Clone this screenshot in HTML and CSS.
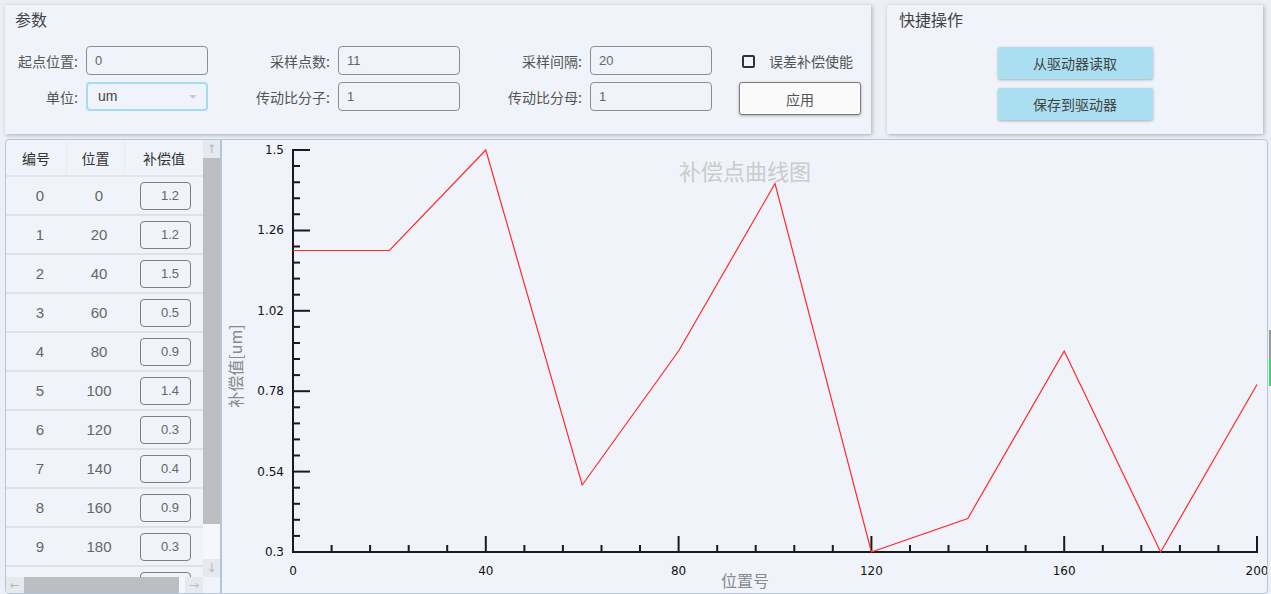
FILE: index.html
```html
<!DOCTYPE html>
<html lang="zh">
<head>
<meta charset="utf-8">
<title>补偿</title>
<link rel="stylesheet" href="styles.css">
</head>
<body>
<div class="top">
  <section class="panel params">
    <div class="ptitle">参数</div>
    <div class="grid">
      <label class="lbl">起点位置:</label><div class="inp">0</div>
      <label class="lbl">采样点数:</label><div class="inp">11</div>
      <label class="lbl">采样间隔:</label><div class="inp">20</div>
      <div class="chk"><span class="box"></span><span>误差补偿使能</span></div>
      <label class="lbl">单位:</label><div class="inp sel">um<span class="caret"></span></div>
      <label class="lbl">传动比分子:</label><div class="inp">1</div>
      <label class="lbl">传动比分母:</label><div class="inp">1</div>
      <button class="apply">应用</button>
    </div>
  </section>
  <section class="panel quick">
    <div class="ptitle">快捷操作</div>
    <div class="qbtns">
      <button class="qbtn">从驱动器读取</button>
      <button class="qbtn">保存到驱动器</button>
    </div>
  </section>
</div>
<div class="bottom">
  <section class="tablep">
    <div class="tmain">
      <div class="tbl">
        <div class="thead"><span>编号</span><span>位置</span><span>补偿值</span></div>
        <div class="trow"><span>0</span><span>0</span><span><i class="cell">1.2</i></span></div>
        <div class="trow"><span>1</span><span>20</span><span><i class="cell">1.2</i></span></div>
        <div class="trow"><span>2</span><span>40</span><span><i class="cell">1.5</i></span></div>
        <div class="trow"><span>3</span><span>60</span><span><i class="cell">0.5</i></span></div>
        <div class="trow"><span>4</span><span>80</span><span><i class="cell">0.9</i></span></div>
        <div class="trow"><span>5</span><span>100</span><span><i class="cell">1.4</i></span></div>
        <div class="trow"><span>6</span><span>120</span><span><i class="cell">0.3</i></span></div>
        <div class="trow"><span>7</span><span>140</span><span><i class="cell">0.4</i></span></div>
        <div class="trow"><span>8</span><span>160</span><span><i class="cell">0.9</i></span></div>
        <div class="trow"><span>9</span><span>180</span><span><i class="cell">0.3</i></span></div>
        <div class="trow"><span></span><span></span><span><i class="cell"></i></span></div>
      </div>
      <div class="vscroll">
        <div class="arr up">↑</div>
        <div class="vthumb"></div>
        <div class="vrest"></div>
        <div class="arr dn">↓</div>
      </div>
    </div>
    <div class="hscroll">
      <div class="arr lf">←</div>
      <div class="hthumb"></div>
      <div class="hrest"></div>
      <div class="arr rt">→</div>
      <div class="corner"></div>
    </div>
  </section>
  <section class="chartp">
    <svg class="chart" width="1046" height="454" viewBox="0 0 1046 454">
      <text x="523" y="40" class="ctitle" text-anchor="middle">补偿点曲线图</text>
      <g class="ticks" stroke="#1a1a1a" stroke-width="2">
        <line x1="71" y1="9" x2="71" y2="413"/>
        <line x1="70" y1="412" x2="1036" y2="412"/>
        <line x1="71" y1="10" x2="88" y2="10"/>
        <line x1="71" y1="90.4" x2="88" y2="90.4"/>
        <line x1="71" y1="170.8" x2="88" y2="170.8"/>
        <line x1="71" y1="251.2" x2="88" y2="251.2"/>
        <line x1="71" y1="331.6" x2="88" y2="331.6"/>
        <line x1="71" y1="26.1" x2="78" y2="26.1"/>
        <line x1="71" y1="42.2" x2="78" y2="42.2"/>
        <line x1="71" y1="58.2" x2="78" y2="58.2"/>
        <line x1="71" y1="74.3" x2="78" y2="74.3"/>
        <line x1="71" y1="106.5" x2="78" y2="106.5"/>
        <line x1="71" y1="122.6" x2="78" y2="122.6"/>
        <line x1="71" y1="138.6" x2="78" y2="138.6"/>
        <line x1="71" y1="154.7" x2="78" y2="154.7"/>
        <line x1="71" y1="186.9" x2="78" y2="186.9"/>
        <line x1="71" y1="203" x2="78" y2="203"/>
        <line x1="71" y1="219" x2="78" y2="219"/>
        <line x1="71" y1="235.1" x2="78" y2="235.1"/>
        <line x1="71" y1="267.3" x2="78" y2="267.3"/>
        <line x1="71" y1="283.4" x2="78" y2="283.4"/>
        <line x1="71" y1="299.4" x2="78" y2="299.4"/>
        <line x1="71" y1="315.5" x2="78" y2="315.5"/>
        <line x1="71" y1="347.7" x2="78" y2="347.7"/>
        <line x1="71" y1="363.8" x2="78" y2="363.8"/>
        <line x1="71" y1="379.8" x2="78" y2="379.8"/>
        <line x1="71" y1="395.9" x2="78" y2="395.9"/>
        <line x1="263.8" y1="396" x2="263.8" y2="412"/>
        <line x1="456.6" y1="396" x2="456.6" y2="412"/>
        <line x1="649.4" y1="396" x2="649.4" y2="412"/>
        <line x1="842.2" y1="396" x2="842.2" y2="412"/>
        <line x1="1035" y1="396" x2="1035" y2="412"/>
        <line x1="109.6" y1="405" x2="109.6" y2="412"/>
        <line x1="148.1" y1="405" x2="148.1" y2="412"/>
        <line x1="186.7" y1="405" x2="186.7" y2="412"/>
        <line x1="225.2" y1="405" x2="225.2" y2="412"/>
        <line x1="302.4" y1="405" x2="302.4" y2="412"/>
        <line x1="340.9" y1="405" x2="340.9" y2="412"/>
        <line x1="379.5" y1="405" x2="379.5" y2="412"/>
        <line x1="418" y1="405" x2="418" y2="412"/>
        <line x1="495.2" y1="405" x2="495.2" y2="412"/>
        <line x1="533.7" y1="405" x2="533.7" y2="412"/>
        <line x1="572.3" y1="405" x2="572.3" y2="412"/>
        <line x1="610.8" y1="405" x2="610.8" y2="412"/>
        <line x1="688" y1="405" x2="688" y2="412"/>
        <line x1="726.5" y1="405" x2="726.5" y2="412"/>
        <line x1="765.1" y1="405" x2="765.1" y2="412"/>
        <line x1="803.6" y1="405" x2="803.6" y2="412"/>
        <line x1="880.8" y1="405" x2="880.8" y2="412"/>
        <line x1="919.3" y1="405" x2="919.3" y2="412"/>
        <line x1="957.9" y1="405" x2="957.9" y2="412"/>
        <line x1="996.4" y1="405" x2="996.4" y2="412"/>
      </g>
      <g class="ylab" text-anchor="end">
        <text x="62" y="14">1.5</text>
        <text x="62" y="94.4">1.26</text>
        <text x="62" y="174.8">1.02</text>
        <text x="62" y="255.2">0.78</text>
        <text x="62" y="335.6">0.54</text>
        <text x="62" y="416">0.3</text>
      </g>
      <g class="ylab" text-anchor="middle">
        <text x="71" y="435">0</text>
        <text x="263.8" y="435">40</text>
        <text x="456.6" y="435">80</text>
        <text x="649.4" y="435">120</text>
        <text x="842.2" y="435">160</text>
        <text x="1035" y="435">200</text>
      </g>
      <polyline fill="none" stroke="#ff2a2a" stroke-width="1.2"
        points="71,110.5 167.4,110.5 263.8,10 360.2,345 456.6,211 553,43.5 649.4,412 745.8,378.5 842.2,211 938.6,412 1035,244.5"/>
      <text x="523" y="447" class="atitle" text-anchor="middle">位置号</text>
      <text class="atitle" text-anchor="middle" transform="translate(20,226) rotate(-90)">补偿值[um]</text>
    </svg>
  </section>
</div>
<div class="edge"></div>
</body>
</html>
```
FILE: styles.css
```css
* { box-sizing: border-box; }
html, body { margin: 0; padding: 0; }
body {
  width: 1271px;
  height: 594px;
  overflow: hidden;
  background: #eceff5;
  font-family: "Noto Sans CJK SC", "Liberation Sans", sans-serif;
  color: #555;
  position: relative;
}
.top {
  display: flex;
  gap: 16px;
  padding: 5px 0 0 5px;
  height: 139px;
}
.panel {
  background: #f0f3fa;
  box-shadow: 1px 1px 4px rgba(0,0,0,0.28);
  height: 129px;
}
.params { width: 866px; padding: 3px 10px 0 10px; }
.quick { width: 376px; padding: 3px 12px 0 12px; }
.ptitle {
  font-size: 16px;
  line-height: 22px;
  color: #444;
}
.grid {
  display: grid;
  grid-template-columns: 63px 122px 114px 122px 114px 122px 141px;
  grid-template-rows: 29px 29px;
  column-gap: 8px;
  row-gap: 7px;
  margin-top: 16px;
  align-items: center;
}
.lbl {
  font-size: 14px;
  text-align: right;
  color: #555;
  white-space: nowrap;
}
.inp {
  height: 29px;
  border: 1px solid #8e8e8e;
  border-radius: 4px;
  background: #f0f3fa;
  font-family: "Liberation Sans", sans-serif;
  font-size: 13px;
  color: #666;
  padding-left: 8px;
  line-height: 27px;
}
.sel {
  border: 2px solid #a6dcef;
  padding-left: 10px;
  line-height: 25px;
  font-size: 14px;
  color: #444;
  position: relative;
}
.caret {
  position: absolute;
  right: 9px;
  top: 11px;
  width: 0; height: 0;
  border-left: 4px solid transparent;
  border-right: 4px solid transparent;
  border-top: 4px solid #c5ccd6;
}
.chk {
  margin-left: 19px;
  display: flex;
  align-items: center;
  gap: 14px;
  font-size: 14px;
  color: #555;
  padding-left: 3px;
  margin-top: 1px;
}
.box {
  width: 13px; height: 13px;
  border: 2px solid #333;
  border-radius: 2px;
}
.apply {
  margin-left: 19px;
  width: 122px;
  height: 33px;
  background: #fafafa;
  border: 1px solid #7a7a7a;
  border-radius: 3px;
  box-shadow: 0 1px 3px rgba(0,0,0,0.3);
  font-family: "Noto Sans CJK SC", sans-serif;
  font-size: 14px;
  color: #555;
  padding: 0;
  margin-top: 4px;
}
.qbtns {
  display: flex;
  flex-direction: column;
  align-items: center;
  gap: 9px;
  margin-top: 17px;
}
.qbtn {
  width: 155px;
  height: 32px;
  background: #aadff1;
  border: none;
  border-radius: 2px;
  box-shadow: 0 1px 3px rgba(0,0,0,0.3);
  font-family: "Noto Sans CJK SC", sans-serif;
  font-size: 14px;
  color: #444;
  padding: 0;
}
.bottom {
  display: flex;
  padding-left: 5px;
  height: 455px;
}
.tablep {
  width: 216px;
  height: 455px;
  background: #f0f3fa;
  border: 1px solid #b4c6de;
  border-radius: 4px 0 0 4px;
  display: flex;
  flex-direction: column;
  overflow: hidden;
}
.tmain { display: flex; height: 437px; }
.tbl { width: 197px; overflow: hidden; }
.thead, .trow {
  display: grid;
  grid-template-columns: 60px 58px 79px;
  align-items: center;
  text-align: center;
}
.thead {
  height: 37px;
  font-size: 14px;
  color: #333;
  border-bottom: 2px solid #e0e4ea;
}
.thead span + span { border-left: 1px solid #e8ebf1; line-height: 36px; }
.trow {
  height: 39px;
  border-bottom: 2px solid #dfe3e9;
  font-family: "Liberation Sans", sans-serif;
  font-size: 15px;
  color: #666;
  padding-left: 4px;
  grid-template-columns: 60px 58px 75px;
}
.cell {
  display: inline-block;
  vertical-align: middle;
  font-style: normal;
  width: 51px;
  height: 28px;
  border: 1px solid #7e7e7e;
  border-radius: 4px;
  text-align: right;
  padding-right: 11px;
  line-height: 26px;
  font-size: 13px;
  color: #666;
}
.vscroll {
  width: 17px;
  display: flex;
  flex-direction: column;
  background: #f5f7fb;
}
.arr {
  height: 18px;
  font-family: "DejaVu Sans", sans-serif;
  font-size: 12px;
  color: #b8bcc2;
  text-align: center;
  line-height: 18px;
  background: #e6e9ee;
}
.vthumb { height: 366px; background: #bdbec2; }
.vrest { flex: 1; }
.hscroll { display: flex; height: 17px; background: #f5f7fb; }
.hscroll .arr { width: 18px; height: 17px; line-height: 17px; }
.hthumb { width: 155px; background: #bdbec2; }
.hrest { width: 6px; }
.corner { flex: 1; background: #f0f3fa; }
.chartp {
  width: 1047px;
  height: 455px;
  background: #f0f3fa;
  border: 1px solid #b4c6de;
  border-radius: 0 4px 4px 0;
  overflow: hidden;
}
.chart { display: block; }
.ctitle {
  font-family: "Noto Sans CJK SC", sans-serif;
  font-size: 22px;
  fill: #cbcbcb;
}
.ylab text {
  font-family: "DejaVu Sans", sans-serif;
  font-size: 12px;
  fill: #111;
}
.atitle {
  font-family: "Noto Sans CJK SC", sans-serif;
  font-size: 16px;
  fill: #8a8a8a;
}
.edge {
  position: absolute;
  right: 0;
  top: 330px;
  width: 2px;
  height: 56px;
  background: linear-gradient(#9a9a9a 0 50%, #3ddc6a 50% 100%);
}
```
